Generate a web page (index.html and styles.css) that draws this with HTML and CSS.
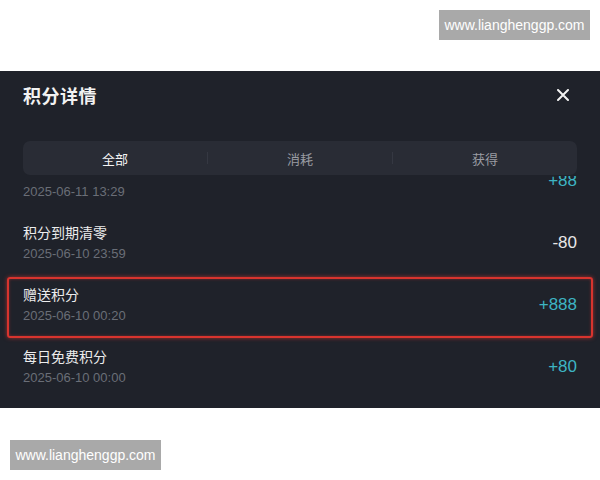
FILE: index.html
```html
<!DOCTYPE html>
<html lang="zh-CN">
<head>
    <meta charset="UTF-8">
    <meta name="viewport" content="width=device-width, initial-scale=1.0">
    <title>积分详情</title>
    <link rel="stylesheet" href="styles.css">
</head>
<body>
    <div class="mark-row mark-top">
        <div class="mark">www.lianghenggp.com</div>
    </div>

    <div class="panel">
        <div class="panel-head">
            <h2>积分详情</h2>
            <button class="close" aria-label="关闭">
                <svg width="12" height="12" viewBox="0 0 12 12">
                    <path d="M1 1 L11 11 M11 1 L1 11" stroke="#f2f2f2" stroke-width="2" stroke-linecap="round"/>
                </svg>
            </button>
        </div>

        <div class="tabs">
            <div class="tab active">全部</div>
            <span class="sep"></span>
            <div class="tab">消耗</div>
            <span class="sep"></span>
            <div class="tab">获得</div>
        </div>

        <div class="list">
            <div class="row first">
                <div class="info">
                    <div class="date">2025-06-11 13:29</div>
                </div>
                <div class="amount plus">+88</div>
            </div>
            <div class="row">
                <div class="info">
                    <div class="name">积分到期清零</div>
                    <div class="date">2025-06-10 23:59</div>
                </div>
                <div class="amount">-80</div>
            </div>
            <div class="row marked">
                <div class="info">
                    <div class="name">赠送积分</div>
                    <div class="date">2025-06-10 00:20</div>
                </div>
                <div class="amount plus">+888</div>
            </div>
            <div class="row">
                <div class="info">
                    <div class="name">每日免费积分</div>
                    <div class="date">2025-06-10 00:00</div>
                </div>
                <div class="amount plus">+80</div>
            </div>
        </div>
    </div>

    <div class="mark-row mark-bottom">
        <div class="mark">www.lianghenggp.com</div>
    </div>
</body>
</html>
```

FILE: styles.css
```css
body {
    margin: 0;
    background: #ffffff;
    font-family: "Liberation Sans", "Noto Sans CJK SC", sans-serif;
}

.mark-row {
    display: flex;
}

.mark-top {
    justify-content: flex-end;
    padding: 10px 10px 0 0;
    height: 71px;
    box-sizing: border-box;
}

.mark-bottom {
    padding: 32px 0 0 10px;
}

.mark {
    width: 151px;
    height: 30px;
    background: #a9a9a9;
    color: #ffffff;
    font-size: 14px;
    line-height: 30px;
    text-align: center;
}

.panel {
    height: 337px;
    background: #1f222a;
    overflow: hidden;
}

.panel-head {
    display: flex;
    justify-content: space-between;
    align-items: center;
    height: 48px;
    padding: 0 30px 0 23px;
}

.panel-head h2 {
    margin: 0;
    font-size: 18px;
    font-weight: bold;
    color: #f2f2f2;
    letter-spacing: 0.5px;
}

.close {
    background: none;
    border: none;
    padding: 0;
    width: 14px;
    height: 14px;
    display: flex;
    align-items: center;
    justify-content: center;
}

.tabs {
    display: flex;
    align-items: center;
    height: 34px;
    margin: 22px 23px 0 23px;
    background: #292c35;
    border-radius: 7px;
}

.tab {
    flex: 1;
    text-align: center;
    font-size: 13px;
    color: #9a9ca3;
}

.tab.active {
    color: #f4f4f4;
}

.sep {
    width: 1px;
    height: 12px;
    background: #353842;
}

.list {
    height: 232px;
    overflow: hidden;
    margin-top: 1px;
}

.row {
    display: flex;
    justify-content: space-between;
    align-items: center;
    height: 62px;
    padding: 0 23px;
}

.row.first {
    margin-top: -26px;
}

.row.first .info {
    padding-top: 22px;
}

.row.marked {
    position: relative;
}

.row.marked::after {
    content: "";
    position: absolute;
    left: 7px;
    right: 7px;
    top: 3px;
    bottom: -2px;
    border: 2px solid #d8342e;
    border-radius: 3px;
    box-shadow: 0 0 4px rgba(216, 52, 46, 0.7), inset 0 0 3px rgba(216, 52, 46, 0.5);
}

.info {
    display: flex;
    flex-direction: column;
    gap: 2px;
}

.name {
    font-size: 14px;
    line-height: 20px;
    color: #ececec;
}

.date {
    font-size: 13px;
    line-height: 18px;
    color: #6a6e77;
}

.amount {
    font-size: 17px;
    color: #e8e8e8;
}

.amount.plus {
    color: #3db5c3;
}
```
